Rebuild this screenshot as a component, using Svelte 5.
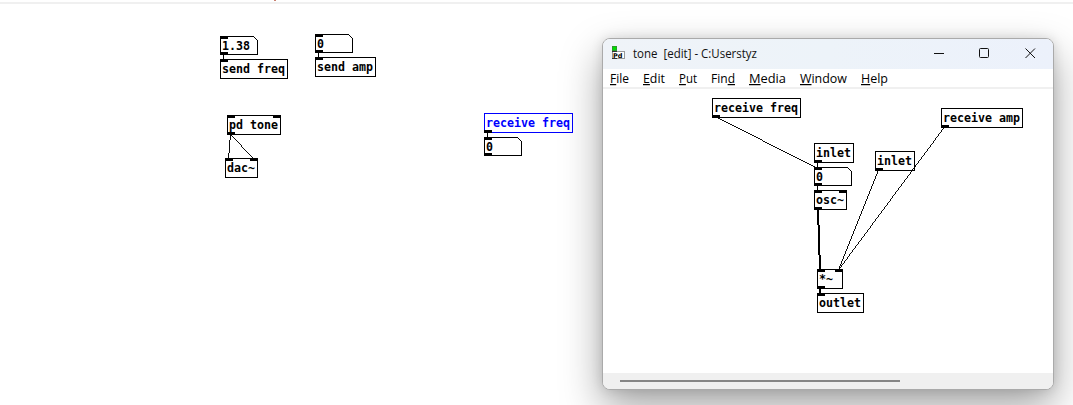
<script>
  const mainPatch = {
    nodes: [
      { x: 220, y: 36, w: 38, t: '1.38', num: true, ins: [0], outs: [0] },
      { x: 220, y: 59, w: 68, t: 'send freq', ins: [0], outs: [] },
      { x: 315, y: 34, w: 38, t: '0', num: true, ins: [0], outs: [0] },
      { x: 315, y: 57, w: 61, t: 'send amp', ins: [0], outs: [] },
      { x: 227, y: 115, w: 54, t: 'pd tone', ins: [0, 46], outs: [0] },
      { x: 225, y: 158, w: 33, t: 'dac~', ins: [0, 25], outs: [] },
      { x: 484, y: 113, w: 89, t: 'receive freq', sel: true, ins: [], outs: [0] },
      { x: 484, y: 137, w: 38, t: '0', num: true, ins: [0], outs: [0] }
    ],
    wires: [
      [223.5, 54, 223.5, 60], [318.5, 52, 318.5, 58], [230.5, 134, 228.5, 159],
      [230.5, 134, 253.5, 159], [487.5, 132, 487.5, 138]
    ]
  };
  const tonePatch = {
    nodes: [
      { x: 712, y: 98, w: 89, t: 'receive freq', ins: [], outs: [0] },
      { x: 814, y: 143, w: 40, t: 'inlet', ins: [], outs: [0] },
      { x: 814, y: 167, w: 38, t: '0', num: true, ins: [0], outs: [0] },
      { x: 814, y: 190, w: 33, t: 'osc~', ins: [0, 25], outs: [0] },
      { x: 941, y: 108, w: 82, t: 'receive amp', ins: [], outs: [0] },
      { x: 875, y: 151, w: 40, t: 'inlet', ins: [], outs: [0] },
      { x: 817, y: 269, w: 26, t: '*~', ins: [0, 18], outs: [0] },
      { x: 817, y: 293, w: 47, t: 'outlet', ins: [0], outs: [] }
    ],
    wires: [
      [715.5, 117, 817.5, 168], [817.5, 162, 817.5, 168], [817.5, 185, 817.5, 191],
      [818, 209, 820, 270, 2], [878.5, 170, 838.5, 270], [944.5, 127, 838.5, 270],
      [820, 288, 820, 294, 2]
    ]
  };
  const menus = [
    ['', 'F', 'ile', 19], ['', 'E', 'dit', 22], ['', 'P', 'ut', 18], ['Fin', 'd', '', 24],
    ['', 'M', 'edia', 37], ['', 'W', 'indow', 47], ['', 'H', 'elp', 27]
  ];
  const menuX = [8, 41, 77, 109, 147, 198, 259];
</script>

{#snippet patch(p)}
  {#each p.nodes as n}
    {@const h = n.num ? 18 : 19}
    <g class="node" class:sel={n.sel} transform="translate({n.x} {n.y})">
      {#if n.num}
        <path class="frame" d="M.5 .5H{n.w - 4.5}L{n.w - 0.5} 4.5V{h + 0.5}H.5Z" />
      {:else}
        <rect class="frame" x=".5" y=".5" width={n.w - 1} height={h} />
      {/if}
      {#each n.ins as i}<rect class="port" x={i} y="0" width="8" height="3" />{/each}
      {#each n.outs as o}<rect class="port" x={o} y={h - 2} width="8" height="3" />{/each}
      <text x="2" y="14" textLength={n.t.length * 7} lengthAdjust="spacingAndGlyphs">{n.t}</text>
    </g>
  {/each}
  {#each p.wires as [x1, y1, x2, y2, sw]}
    <line class="wire" {x1} {y1} {x2} {y2} stroke-width={sw ?? (x1 === x2 ? 1 : 0.95)} />
  {/each}
{/snippet}

<div class="page">
  <div class="topline"><i></i></div>
  <svg class="canvas" viewBox="0 4 1073 401" width="1073" height="401">{@render patch(mainPatch)}</svg>

  <section class="window">
    <header>
      <svg class="logo" width="15" height="14" viewBox="0 0 15 14">
        <rect x="1.5" y="5.5" width="12" height="7" fill="#fff" stroke="#999" />
        <path d="M1 5.5h5M1 12.5h5" stroke="#333" />
        <rect x="1.5" y=".5" width="4" height="4" fill="#0d0" stroke="#2a9a2a" />
        <text x="2" y="11.5">Pd</text>
      </svg>
      <svg class="title" width="160" height="30"><text x="0" y="19" textLength="124" lengthAdjust="spacingAndGlyphs" xml:space="preserve">tone  [edit] - C:Userstyz</text></svg>
      <svg class="controls" width="112" height="30" viewBox="0 0 112 30">
        <path d="M0 14.5h10" />
        <rect x="45.5" y="9.5" width="9" height="9" rx="1" />
        <path d="M91.5 9.5l9.5 9.5M101 9.5l-9.5 9.5" />
      </svg>
    </header>
    <nav>
      <svg width="450" height="18">
        {#each menus as [a, u, b, w], i}
          <text x={menuX[i] - 1} y="14" textLength={w} lengthAdjust="spacingAndGlyphs">{a}<tspan class="key">{u}</tspan>{b}</text>
        {/each}
      </svg>
    </nav>
    <svg class="canvas" viewBox="603 89 450 284" width="450" height="284">{@render patch(tonePatch)}</svg>
    <footer><div class="thumb"></div></footer>
  </section>
</div>

<style>
  .page { position: relative; width: 1073px; height: 405px; overflow: hidden; background: #fff; }
  .topline { height: 2px; border-bottom: 2px solid #f0f0f0; }
  .topline i { display: block; width: 2px; height: 1px; margin-left: 274px; background: #c98070; }
  svg { display: block; overflow: visible; }
  .window {
    position: absolute; left: 602px; top: 38px; width: 450px; height: 350px;
    display: flex; flex-direction: column; overflow: hidden;
    border: 1px solid #aaa; border-radius: 8px; background: #fff;
    box-shadow: 0 17px 40px rgba(0, 0, 0, .36), 0 0 12px rgba(0, 0, 0, .12);
  }
  header { display: flex; height: 30px; background: linear-gradient(90deg, #eff3f8, #edf3f9 50%, #ecf1fb); }
  .logo { margin: 7px 7px 0 8px; }
  .logo text { font: bold 6.5px "DejaVu Sans", sans-serif; }
  .title text, nav text { font-family: "Open Sans", sans-serif; font-size: 12.2px; fill: #111; }
  .controls { margin-left: auto; margin-right: 7px; fill: none; stroke: #111; stroke-width: 1; }
  nav { height: 18px; border-bottom: 2px solid #f0f0f0; }
  nav text { fill: #000; }
  .key { text-decoration: underline; }
  .wire { stroke: #000; shape-rendering: crispEdges; }
  .frame { fill: #fff; stroke: #000; shape-rendering: crispEdges; }
  .port { shape-rendering: crispEdges; }
  .node text { font: bold 12.4px "DejaVu Sans Mono", monospace; }
  .sel .frame { stroke: #00f; }
  .sel text { fill: #00f; }
  footer { height: 16px; padding: 7px 17px 0; box-sizing: border-box; background: #f0f0f0; }
  .thumb { width: 280px; height: 2px; background: #868686; }
</style>
